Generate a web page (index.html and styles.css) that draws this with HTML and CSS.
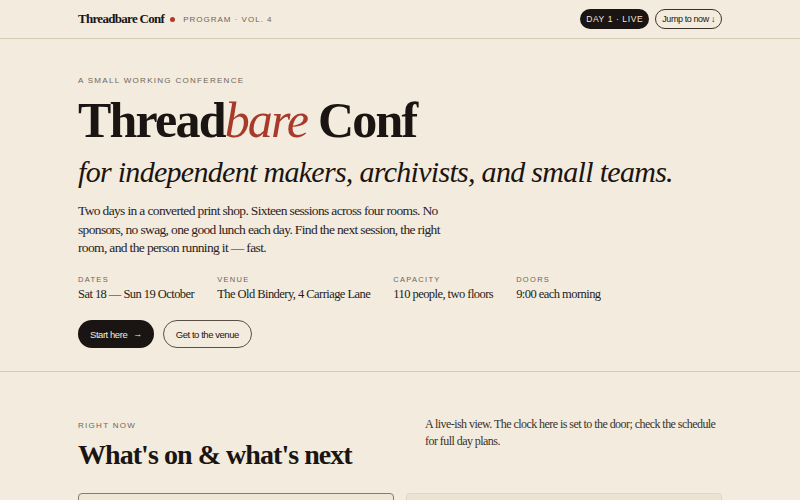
FILE: index.html
```html
<!DOCTYPE html>
<html lang="en">
<head>
<meta charset="utf-8">
<title>Threadbare Conf — Program</title>
<link rel="stylesheet" href="styles.css">
</head>
<body>
<header class="topbar">
  <div class="wrap bar">
    <div class="brand-row">
      <span class="brand">Threadbare Conf</span>
      <span class="dot"></span>
      <span class="issue">PROGRAM · VOL. 4</span>
    </div>
    <div class="bar-actions">
      <span class="pill pill-live">DAY 1 · LIVE</span>
      <a class="pill pill-jump" href="#now">Jump to now ↓</a>
    </div>
  </div>
</header>

<section class="hero">
  <div class="wrap">
    <p class="eyebrow">A SMALL WORKING CONFERENCE</p>
    <h1 class="title">Thread<em>bare</em> Conf</h1>
    <p class="subtitle">for independent makers, archivists, and small teams.</p>
    <p class="lede">Two days in a converted print shop. Sixteen sessions across four rooms. No sponsors, no swag, one good lunch each day. Find the next session, the right room, and the person running it — fast.</p>
    <dl class="facts">
      <div class="fact"><dt>DATES</dt><dd>Sat 18 — Sun 19 October</dd></div>
      <div class="fact"><dt>VENUE</dt><dd>The Old Bindery, 4 Carriage Lane</dd></div>
      <div class="fact"><dt>CAPACITY</dt><dd>110 people, two floors</dd></div>
      <div class="fact"><dt>DOORS</dt><dd>9:00 each morning</dd></div>
    </dl>
    <div class="cta">
      <a class="btn btn-dark" href="#now">Start here <span class="arrow">→</span></a>
      <a class="btn btn-line" href="#venue">Get to the venue</a>
    </div>
  </div>
</section>

<section class="now" id="now">
  <div class="wrap">
    <div class="now-head">
      <div>
        <p class="eyebrow eyebrow-now">RIGHT NOW</p>
        <h2 class="now-title">What's on &amp; what's next</h2>
      </div>
      <p class="now-note">A live-ish view. The clock here is set to the door; check the schedule for full day plans.</p>
    </div>
    <div class="cards">
      <article class="card card-current">
        <p class="card-tag">ON NOW</p>
        <h3 class="card-title">Opening: why we still print</h3>
      </article>
      <article class="card card-next">
        <p class="card-tag">UP NEXT</p>
        <h3 class="card-title">Archiving the small web</h3>
      </article>
    </div>
  </div>
</section>
</body>
</html>
```

FILE: styles.css
```css
* { box-sizing: border-box; }

html, body {
  margin: 0;
  padding: 0;
  background: #f3ebdd;
  color: #1a1512;
  font-family: "Liberation Serif", "Times New Roman", serif;
}

p, h1, h2, h3, dl, dd, dt { margin: 0; }

a { color: inherit; text-decoration: none; }

.wrap {
  width: 644px;
  margin: 0 auto;
}

/* top bar */
.topbar {
  border-bottom: 1px solid #d6cbb7;
}

.bar {
  height: 38px;
  display: flex;
  align-items: center;
  justify-content: space-between;
}

.brand-row {
  display: flex;
  align-items: center;
}

.brand {
  font-weight: 700;
  font-size: 13px;
  letter-spacing: -0.7px;
}

.dot {
  width: 5px;
  height: 5px;
  border-radius: 50%;
  background: #b0392b;
  margin: 1px 8px 0 6px;
}

.issue {
  font-family: "Liberation Sans", Arial, sans-serif;
  font-size: 8px;
  letter-spacing: 1px;
  color: #6e655b;
}

.bar-actions {
  display: flex;
  align-items: center;
  gap: 6px;
}

.pill {
  height: 20px;
  display: inline-flex;
  align-items: center;
  border-radius: 999px;
  font-family: "Liberation Sans", Arial, sans-serif;
}

.pill-live {
  background: #1a1512;
  color: #f0e7d8;
  font-size: 8.5px;
  letter-spacing: 0.6px;
  padding: 0 6px;
}

.pill-jump {
  border: 1px solid #3a322b;
  color: #1a1512;
  font-size: 9px;
  padding: 0 6px;
  letter-spacing: -0.4px;
}

/* hero */
.hero {
  padding: 37px 0 23px;
  border-bottom: 1px solid #d6cbb7;
}

.eyebrow {
  font-family: "Liberation Sans", Arial, sans-serif;
  font-size: 8px;
  letter-spacing: 1.3px;
  color: #6e655b;
}

.title {
  margin-top: 5px;
  font-size: 50px;
  line-height: 1.2;
  font-weight: 700;
  letter-spacing: -1.8px;
}

.title em {
  font-weight: 400;
  color: #a83a2c;
}

.subtitle {
  margin-top: 2px;
  font-style: italic;
  font-size: 30px;
  line-height: 1.3;
  letter-spacing: -0.7px;
}

.lede {
  margin-top: 11px;
  width: 370px;
  font-size: 13.5px;
  line-height: 18.7px;
  letter-spacing: -0.65px;
  color: #2a231e;
}

.facts {
  margin-top: 17px;
  display: flex;
  gap: 23px;
}

.fact dt {
  font-family: "Liberation Sans", Arial, sans-serif;
  font-size: 7.5px;
  letter-spacing: 1.3px;
  color: #6e655b;
}

.fact dd {
  margin-top: 3px;
  font-size: 12.5px;
  letter-spacing: -0.55px;
  color: #231d19;
}

.cta {
  margin-top: 18px;
  display: flex;
  gap: 9px;
}

.btn {
  height: 28px;
  display: inline-flex;
  align-items: center;
  padding: 0 12px;
  border-radius: 999px;
  font-family: "Liberation Sans", Arial, sans-serif;
  font-size: 9.5px;
  letter-spacing: -0.45px;
}

.btn-dark {
  background: #1a1512;
  color: #f3ebdd;
}

.btn-dark .arrow {
  margin-left: 6px;
  font-size: 9px;
}

.btn-line {
  border: 1px solid #5a5046;
  color: #1a1512;
}

/* right now */
.now {
  padding: 48px 0 24px;
}

.now-head {
  display: flex;
  justify-content: space-between;
  align-items: flex-start;
}

.eyebrow-now {
  margin-top: 1px;
}

.now-title {
  margin-top: 8px;
  font-size: 28px;
  line-height: 1.2;
  font-weight: 700;
  letter-spacing: -0.95px;
}

.now-note {
  width: 297px;
  margin-top: -4px;
  font-size: 12px;
  line-height: 17px;
  letter-spacing: -0.55px;
  color: #3a322b;
}

.cards {
  margin-top: 21px;
  display: grid;
  grid-template-columns: 1fr 1fr;
  gap: 12px;
}

.card {
  border-radius: 4px;
  padding: 16px 16px 18px;
  min-height: 120px;
}

.card-current {
  border: 1px solid #857a6b;
  background: #efe6d6;
}

.card-next {
  border: 1px solid #e1d6c2;
  background: #ece3d2;
}

.card-tag {
  font-family: "Liberation Sans", Arial, sans-serif;
  font-size: 8px;
  letter-spacing: 1.5px;
  color: #6e655b;
}

.card-title {
  margin-top: 8px;
  font-size: 18px;
}
```
